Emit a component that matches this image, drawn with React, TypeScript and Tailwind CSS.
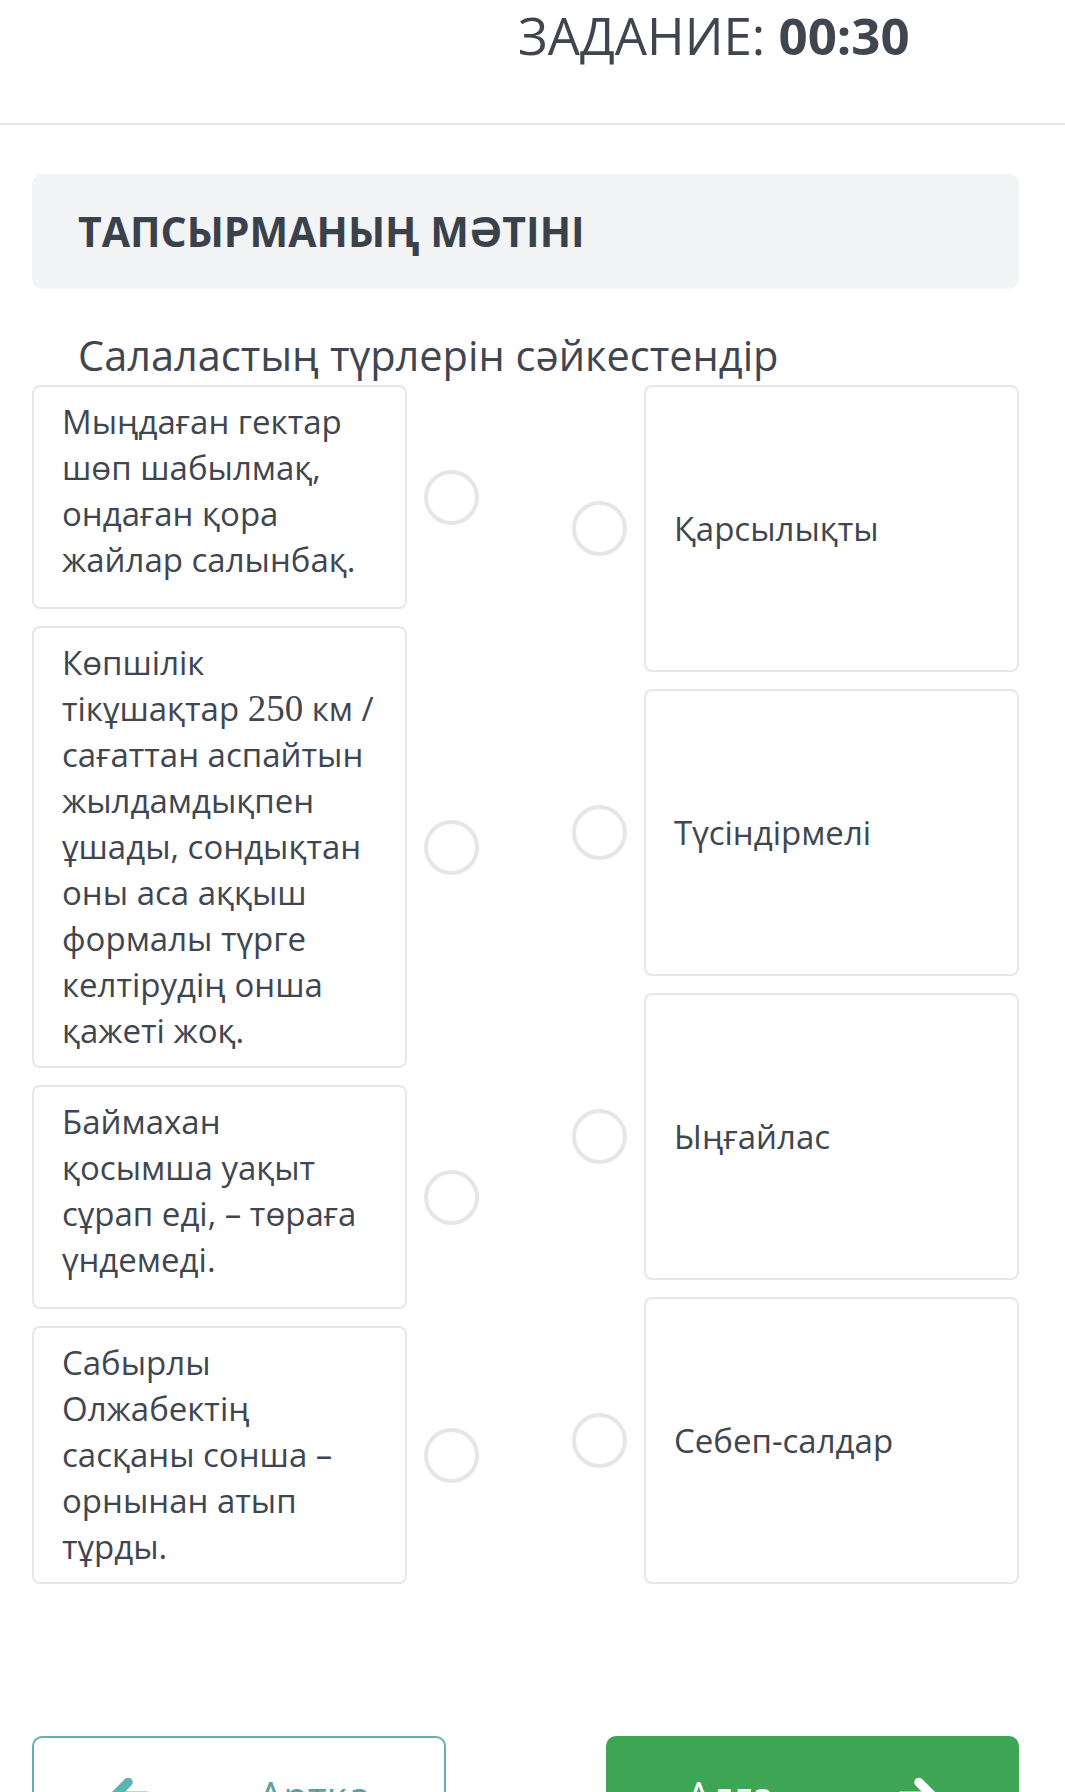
import React from 'react';

const leftItems: React.ReactNode[] = [
  'Мыңдаған гектар шөп шабылмақ, ондаған қора жайлар салынбақ.',
  <>
    Көпшілік тікұшақтар{' '}
    <span className="text-[1.12em] leading-[0]" style={{ fontFamily: '"Liberation Serif", serif' }}>
      250
    </span>{' '}
    км / сағаттан аспайтын жылдамдықпен ұшады, сондықтан оны аса аққыш формалы түрге келтірудің онша
    қажеті жоқ.
  </>,
  'Баймахан қосымша уақыт сұрап еді, – төраға үндемеді.',
  'Сабырлы Олжабектің сасқаны сонша – орнынан атып тұрды.',
];

const rightItems = ['Қарсылықты', 'Түсіндірмелі', 'Ыңғайлас', 'Себеп-салдар'];

function Radio() {
  return <div className="w-[55px] h-[55px] shrink-0 rounded-full border-[4px] border-[#e4e6ea] bg-white" />;
}

function Arrow({ dir, className }: { dir: 'left' | 'right'; className?: string }) {
  return (
    <svg
      viewBox="0 0 48 48"
      className={className}
      fill="none"
      stroke="currentColor"
      strokeWidth={10}
      strokeLinecap="round"
      strokeLinejoin="round"
      style={dir === 'right' ? { transform: 'scaleX(-1)' } : undefined}
    >
      <path d="M42 24H8M22 9L7 24l15 15" />
    </svg>
  );
}

export default function App() {
  return (
    <div
      className="w-[1065px] h-[1792px] overflow-hidden bg-white text-[#3f4650]"
      style={{ fontFamily: '"Open Sans", "Noto Sans", sans-serif' }}
    >
      {/* header */}
      <div className="h-[125px] border-b-2 border-[#e5e7eb] overflow-hidden">
        <div className="-mt-[50px] pl-[68px] text-[52px] leading-[60px] font-bold text-[#3a414b]">№ 1</div>
        <div className="pl-[518px] -mt-[5px] text-[51px] leading-[60px] text-[#3f4650]">
          ЗАДАНИЕ: <span className="font-bold">00:30</span>
        </div>
      </div>

      <div className="pl-[32px] pr-[46px]">
        {/* task title */}
        <div className="mt-[49px] h-[115px] rounded-[10px] bg-[#f3f4f6] flex items-center pl-[46px]">
          <h2 className="text-[41px] font-bold text-[#3a414b]">ТАПСЫРМАНЫҢ МӘТІНІ</h2>
        </div>

        <p className="mt-[43px] pl-[46px] text-[41.5px] leading-[46px]">Салаластың түрлерін сәйкестендір</p>

        {/* matching */}
        <div className="mt-[7px] flex justify-between">
          <div className="flex flex-col gap-[17px]">
            {leftItems.map((t, i) => (
              <div key={i} className="flex items-center">
                <div className="w-[375px] min-h-[224px] rounded-[8px] border-2 border-[#e5e7eb] pl-[28px] pr-[26px] py-[12px] text-[33px] leading-[46px]">
                  {t}
                </div>
                <div className="ml-[17px]">
                  <Radio />
                </div>
              </div>
            ))}
          </div>
          <div className="flex flex-col gap-[17px]">
            {rightItems.map((t) => (
              <div key={t} className="flex-1 flex items-center">
                <Radio />
                <div className="ml-[17px] w-[375px] self-stretch rounded-[8px] border-2 border-[#e5e7eb] px-[28px] flex items-center text-[33px] leading-[46px]">
                  {t}
                </div>
              </div>
            ))}
          </div>
        </div>

        {/* nav buttons */}
        <div className="mt-[152px] flex justify-between">
          <button className="w-[414px] h-[120px] rounded-[10px] border-2 border-[#6aaeae] flex items-center pl-[74px] text-[#5f9fa1]">
            <Arrow dir="left" className="w-[44px] h-[44px] text-[#5bb5b0]" />
            <span className="ml-[106px] text-[40px]">Артқа</span>
          </button>
          <button className="w-[413px] h-[120px] rounded-[10px] bg-[#3da553] flex items-center pl-[80px] text-white">
            <span className="text-[40px]">Алға</span>
            <Arrow dir="right" className="ml-auto mr-[80px] w-[44px] h-[44px]" />
          </button>
        </div>
      </div>
    </div>
  );
}
